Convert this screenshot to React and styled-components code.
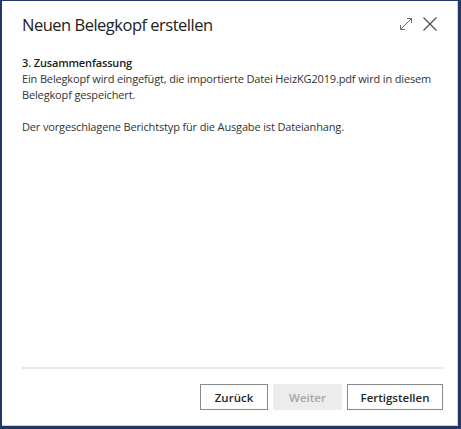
import React from "react";
import styled, { createGlobalStyle } from "styled-components";

const Global = createGlobalStyle`
  html, body { margin: 0; padding: 0; background: #ffffff; }
  body { font-family: "Open Sans", "Noto Sans", sans-serif; }
  * { box-sizing: border-box; }
`;

const Frame = styled.div`
  width: 461px;
  height: 429px;
  border-style: solid;
  border-color: #1f3868;
  border-width: 1px 3px 3px 2px;
  background: #ffffff;
`;

const Dialog = styled.div`
  height: 100%;
  display: flex;
  flex-direction: column;
  border-right: 1px solid #cfcfcf;
  border-bottom: 1px solid #cfcfcf;
  padding: 0 8px 0 20px;
`;

const Header = styled.div`
  display: flex;
  align-items: center;
  justify-content: space-between;
  height: 46px;
  margin-right: 6px;
`;

const Title = styled.h1`
  margin: 0;
  font-size: 16.5px;
  font-weight: 400;
  color: #212121;
  letter-spacing: -0.5px;
`;

const Tools = styled.div`
  display: flex;
  align-items: center;
  gap: 9px;
  margin-right: 5px;
`;

const IconButton = styled.span`
  display: inline-flex;
  width: ${(p) => p.size}px;
  height: ${(p) => p.size}px;
  color: ${(p) => p.color || "#505050"};
`;

const Body = styled.div`
  flex: 1;
  padding-top: 8px;
  font-size: 11px;
  line-height: 16px;
  color: #333333;
  letter-spacing: -0.15px;
`;

const Heading = styled.div`
  font-weight: 600;
  color: #212121;
`;

const Para = styled.p`
  margin: 0 0 ${(p) => p.gap || 0}px 0;
`;

const Footer = styled.div`
  border-top: 2px solid #e8e8e8;
  margin-right: 6px;
  height: 58px;
  display: flex;
  justify-content: flex-end;
  align-items: flex-start;
  padding-top: 15px;
  gap: 5px;
`;

const Button = styled.button`
  font-family: inherit;
  font-size: 11.5px;
  font-weight: 600;
  height: 26px;
  width: ${(p) => p.w}px;
  padding: 0;
  background: ${(p) => (p.disabled ? "#ececec" : "#ffffff")};
  color: ${(p) => (p.disabled ? "#a6a6a6" : "#262626")};
  border: 1px solid ${(p) => (p.disabled ? "#ececec" : "#8a8a8a")};
  border-radius: 0;
  cursor: default;
`;

export default function App() {
  return (
    <>
      <Global />
      <Frame>
        <Dialog>
          <Header>
            <Title>Neuen Belegkopf erstellen</Title>
            <Tools>
              <IconButton size={14} color="#6a6a6a">
                <svg width="14" height="14" viewBox="0 0 14 14" fill="none" stroke="currentColor" strokeWidth="1">
                  <path d="M1.5 12.5 L12.5 1.5" />
                  <path d="M8 1.5 H12.5 V6" />
                  <path d="M1.5 8 V12.5 H6" />
                </svg>
              </IconButton>
              <IconButton size={16}>
                <svg width="16" height="16" viewBox="0 0 16 16" fill="none" stroke="currentColor" strokeWidth="1.2">
                  <path d="M1.5 1.5 L14.5 14.5" />
                  <path d="M14.5 1.5 L1.5 14.5" />
                </svg>
              </IconButton>
            </Tools>
          </Header>
          <Body>
            <Heading>3. Zusammenfassung</Heading>
            <Para gap={16}>
              Ein Belegkopf wird eingefügt, die importierte Datei HeizKG2019.pdf wird in diesem Belegkopf gespeichert.
            </Para>
            <Para>Der vorgeschlagene Berichtstyp für die Ausgabe ist Dateianhang.</Para>
          </Body>
          <Footer>
            <Button w={68}>Zurück</Button>
            <Button w={69} disabled>Weiter</Button>
            <Button w={96}>Fertigstellen</Button>
          </Footer>
        </Dialog>
      </Frame>
    </>
  );
}
